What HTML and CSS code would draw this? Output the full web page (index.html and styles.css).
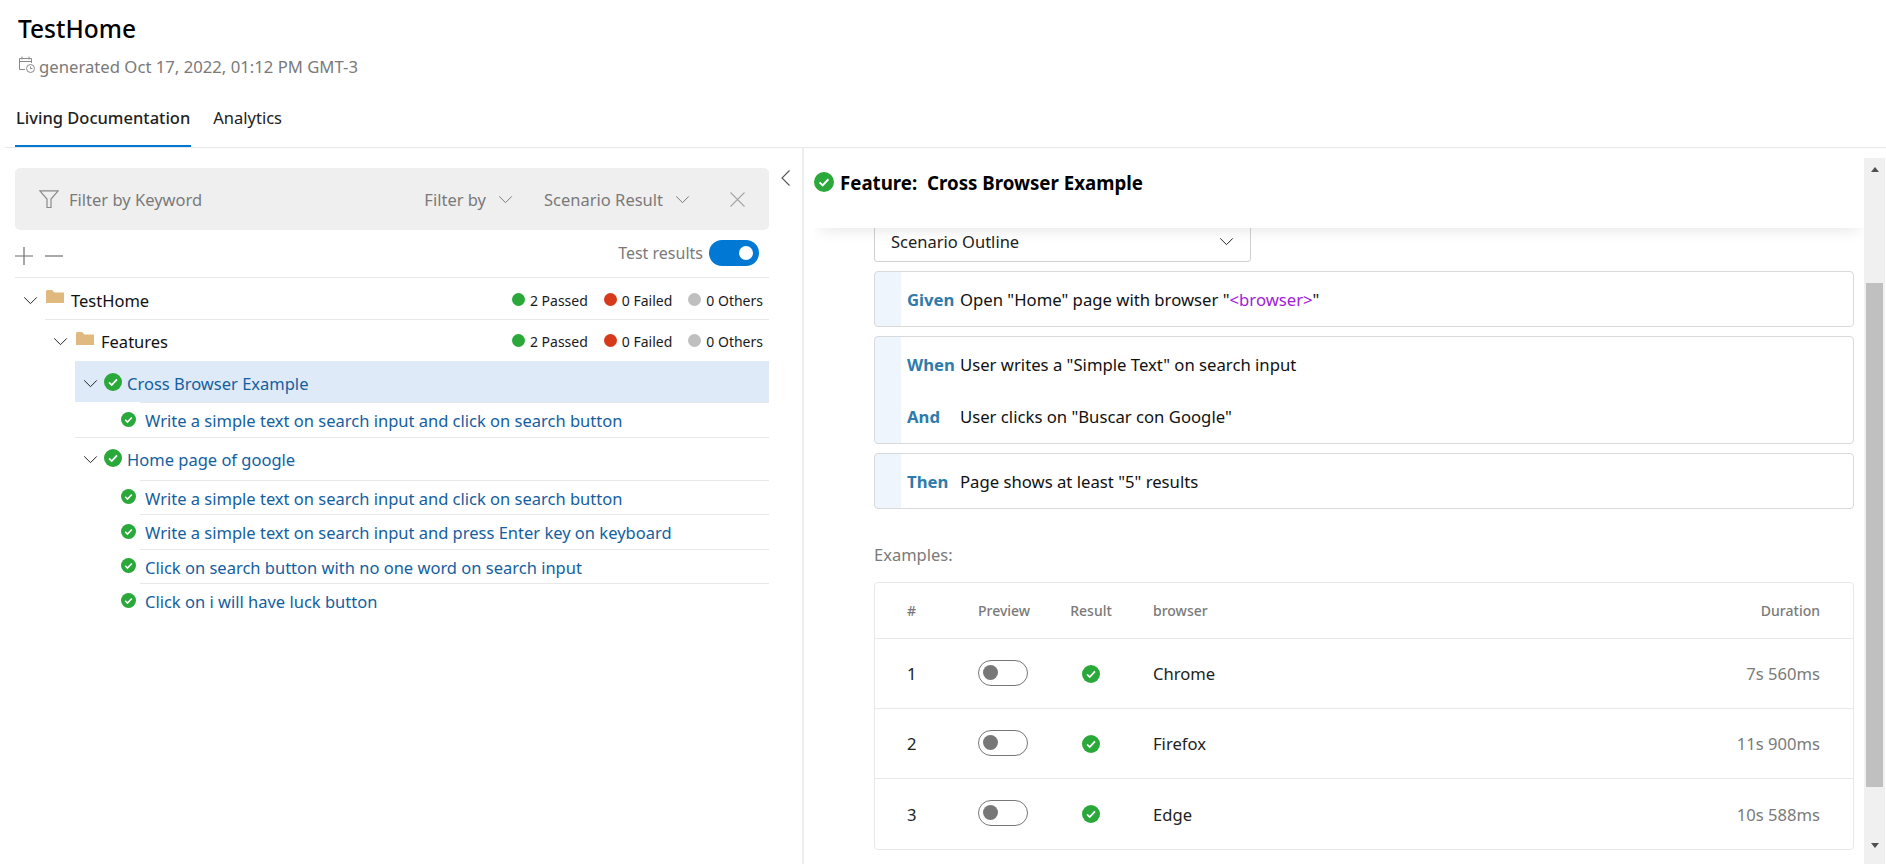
FILE: index.html
```html
<!DOCTYPE html>
<html lang="en">

<head>
    <meta charset="UTF-8">
    <title>TestHome - Living Documentation</title>
    <link rel="stylesheet" href="styles.css">
</head>

<body>
    <svg class="defs" width="0" height="0">
        <symbol id="check" viewBox="0 0 20 20">
            <circle cx="10" cy="10" r="10" fill="#2aa83a" />
            <path d="M5.6 10.4l3 3 5.8-6.2" fill="none" stroke="#fff" stroke-width="2" />
        </symbol>
        <symbol id="chevron" viewBox="0 0 16 10">
            <path d="M1 1.5l7 7 7-7" fill="none" stroke="currentColor" stroke-width="1.1" />
        </symbol>
        <symbol id="folder" viewBox="0 0 18 13">
            <path d="M0 1.5Q0 0 1.5 0H6l2.5 2.5H18V13H0z" fill="#dfb97e" />
        </symbol>
    </svg>

    <header class="page-head">
        <h1 class="title">TestHome</h1>
        <p class="generated">
            <svg class="cal-icon" width="18" height="18" viewBox="0 0 18 18" fill="none" stroke="#8a8a8a">
                <path d="M7 13.5H1.5v-11h12V7M1.5 5.5h12M4 .5v3M11 .5v3" />
                <circle cx="12.5" cy="12.5" r="4" />
                <path d="M12.5 10.5v2h2" />
            </svg>
            generated Oct 17, 2022, 01:12 PM GMT-3
        </p>
        <nav class="tabs">
            <a class="tab active">Living Documentation</a>
            <a class="tab">Analytics</a>
        </nav>
    </header>

    <main class="main">
        <section class="left">
            <div class="filter-bar">
                <svg class="funnel" width="20" height="19" viewBox="0 0 20 19" fill="none" stroke="#8a8a8a" stroke-width="1.2">
                    <path d="M.8.8h18.4L12 9v8.5H8V9z" />
                </svg>
                <span class="filter-keyword">Filter by Keyword</span>
                <span class="filter-drop">Filter by <svg class="chev-grey"><use href="#chevron" /></svg></span>
                <span class="filter-drop wide">Scenario Result <svg class="chev-grey"><use href="#chevron" /></svg></span>
                <svg class="filter-close" width="15" height="15" viewBox="0 0 15 15" stroke="#a6a6a6" stroke-width="1.1">
                    <path d="M.5.5l14 14M14.5.5l-14 14" />
                </svg>
            </div>

            <div class="tree-tools">
                <svg class="tool" width="18" height="18" viewBox="0 0 18 18" stroke="#6f6f6f" stroke-width="1.2">
                    <path d="M0 9h18M9 0v18" />
                </svg>
                <svg class="tool" width="18" height="18" viewBox="0 0 18 18" stroke="#6f6f6f" stroke-width="1.2">
                    <path d="M0 9h18" />
                </svg>
                <span class="tools-label">Test results</span>
                <span class="switch"></span>
            </div>

            <div class="tree">
                <div class="row row-root">
                    <svg class="chev"><use href="#chevron" /></svg>
                    <svg class="folder"><use href="#folder" /></svg>
                    <span class="row-name">TestHome</span>
                    <span class="counts">
                        <span class="count"><i class="dot green"></i>2 Passed</span>
                        <span class="count"><i class="dot red"></i>0 Failed</span>
                        <span class="count"><i class="dot grey"></i>0 Others</span>
                    </span>
                </div>
                <div class="row row-folder">
                    <svg class="chev"><use href="#chevron" /></svg>
                    <svg class="folder"><use href="#folder" /></svg>
                    <span class="row-name">Features</span>
                    <span class="counts">
                        <span class="count"><i class="dot green"></i>2 Passed</span>
                        <span class="count"><i class="dot red"></i>0 Failed</span>
                        <span class="count"><i class="dot grey"></i>0 Others</span>
                    </span>
                </div>
                <div class="row row-feature selected">
                    <svg class="chev"><use href="#chevron" /></svg>
                    <svg class="ok"><use href="#check" /></svg>
                    <a class="row-link">Cross Browser Example</a>
                </div>
                <div class="row row-scenario">
                    <svg class="ok-small"><use href="#check" /></svg>
                    <a class="row-link">Write a simple text on search input and click on search button</a>
                </div>
                <div class="row row-feature second">
                    <svg class="chev"><use href="#chevron" /></svg>
                    <svg class="ok"><use href="#check" /></svg>
                    <a class="row-link">Home page of google</a>
                </div>
                <div class="row row-scenario">
                    <svg class="ok-small"><use href="#check" /></svg>
                    <a class="row-link">Write a simple text on search input and click on search button</a>
                </div>
                <div class="row row-scenario">
                    <svg class="ok-small"><use href="#check" /></svg>
                    <a class="row-link">Write a simple text on search input and press Enter key on keyboard</a>
                </div>
                <div class="row row-scenario">
                    <svg class="ok-small"><use href="#check" /></svg>
                    <a class="row-link">Click on search button with no one word on search input</a>
                </div>
                <div class="row row-scenario">
                    <svg class="ok-small"><use href="#check" /></svg>
                    <a class="row-link">Click on i will have luck button</a>
                </div>
            </div>
        </section>

        <div class="collapse">
            <svg width="9" height="16" viewBox="0 0 9 16" fill="none" stroke="#555" stroke-width="1.1">
                <path d="M8.5.5L1 8l7.5 7.5" />
            </svg>
        </div>

        <section class="detail">
            <div class="detail-body">
                <div class="feature-head">
                    <svg class="ok"><use href="#check" /></svg>
                    <h2 class="feature-title">Feature:&nbsp; Cross Browser Example</h2>
                </div>
                <div class="content">
                    <div class="select">Scenario Outline <svg class="chev"><use href="#chevron" /></svg></div>

                    <div class="step">
                        <div class="step-line"><b class="kw">Given</b><span>Open "Home" page with browser "<span class="param">&lt;browser&gt;</span>"</span></div>
                    </div>
                    <div class="step">
                        <div class="step-line"><b class="kw">When</b><span>User writes a "Simple Text" on search input</span></div>
                        <div class="step-line"><b class="kw">And</b><span>User clicks on "Buscar con Google"</span></div>
                    </div>
                    <div class="step">
                        <div class="step-line"><b class="kw">Then</b><span>Page shows at least "5" results</span></div>
                    </div>

                    <p class="examples-label">Examples:</p>
                    <table class="examples">
                        <thead>
                            <tr>
                                <th class="col-num">#</th>
                                <th class="col-preview">Preview</th>
                                <th class="col-result">Result</th>
                                <th class="col-browser">browser</th>
                                <th class="col-duration">Duration</th>
                            </tr>
                        </thead>
                        <tbody>
                            <tr>
                                <td class="col-num">1</td>
                                <td class="col-preview"><span class="mini-switch"></span></td>
                                <td class="col-result"><svg class="ok-small"><use href="#check" /></svg></td>
                                <td class="col-browser">Chrome</td>
                                <td class="col-duration">7s 560ms</td>
                            </tr>
                            <tr>
                                <td class="col-num">2</td>
                                <td class="col-preview"><span class="mini-switch"></span></td>
                                <td class="col-result"><svg class="ok-small"><use href="#check" /></svg></td>
                                <td class="col-browser">Firefox</td>
                                <td class="col-duration">11s 900ms</td>
                            </tr>
                            <tr>
                                <td class="col-num">3</td>
                                <td class="col-preview"><span class="mini-switch"></span></td>
                                <td class="col-result"><svg class="ok-small"><use href="#check" /></svg></td>
                                <td class="col-browser">Edge</td>
                                <td class="col-duration">10s 588ms</td>
                            </tr>
                        </tbody>
                    </table>
                </div>
            </div>
            <div class="scrollbar">
                <span class="arrow-up"></span>
                <span class="thumb"></span>
                <span class="arrow-down"></span>
            </div>
        </section>
    </main>
</body>

</html>
```

FILE: styles.css
```css
* {
    box-sizing: border-box;
}

html,
body {
    height: 100%;
}

body {
    margin: 0;
    overflow: hidden;
    display: flex;
    flex-direction: column;
    background-color: #fff;
    color: #1a1a1a;
    font-family: "Noto Sans", "Open Sans", Arial, sans-serif;
    font-size: 16.5px;
}

.defs {
    position: absolute;
}

/* header */
.page-head {
    height: 148px;
    flex-shrink: 0;
    padding: 12px 0 0 10px;
    margin-left: 5px;
    border-bottom: 1px solid #e8e8e8;
}

.title {
    margin: 0 0 0 3px;
    height: 34px;
    font-size: 24.5px;
    line-height: 34px;
    font-weight: 500;
    color: #000;
}

.generated {
    margin: 8px 0 0 3px;
    height: 24px;
    display: flex;
    align-items: center;
    gap: 3px;
    font-size: 16.7px;
    color: #7a7a7a;
}

.cal-icon {
    margin-top: -3px;
}

.tabs {
    display: flex;
    gap: 21px;
    margin-top: 24px;
}

.tab {
    height: 45px;
    padding: 0 1px;
    line-height: 32px;
    font-size: 16.5px;
    color: #222;
}

.tab.active {
    font-weight: 500;
    border-bottom: 2px solid #0078d4;
}

.main {
    flex: 1;
    min-height: 0;
    display: flex;
}

/* left side */
.left {
    width: 754px;
    margin-left: 15px;
    padding-top: 20px;
    flex-shrink: 0;
}

.filter-bar {
    height: 62px;
    display: flex;
    align-items: center;
    padding: 1px 24px 0;
    background-color: #efefef;
    border-radius: 5px;
    color: #7a7a7a;
}

.filter-keyword {
    margin-left: 10px;
    flex: 1;
}

.filter-drop {
    display: flex;
    align-items: center;
    gap: 12px;
    margin-right: 31px;
}

.filter-drop.wide {
    margin-right: 40px;
}

.chev-grey {
    width: 15px;
    height: 9px;
    color: #7a7a7a;
}

.tree-tools {
    height: 48px;
    padding: 0 10px 2px 0;
    display: flex;
    align-items: center;
    gap: 12px;
    border-bottom: 1px solid #e8e8e8;
}

.tool {
    margin-top: 6px;
}

.tools-label {
    margin-left: auto;
    margin-right: -6px;
    color: #7a7a7a;
    font-size: 16px;
}

.switch {
    position: relative;
    width: 50px;
    height: 26px;
    border-radius: 13px;
    background-color: #0078d4;
}

.switch::after {
    content: "";
    position: absolute;
    top: 6px;
    right: 6px;
    width: 14px;
    height: 14px;
    border-radius: 50%;
    background-color: #fff;
}

.row {
    display: flex;
    align-items: center;
    padding-top: 2px;
}

.row-root {
    height: 42px;
    padding-left: 8px;
    position: relative;
}

/* line under the root row starts at the folder, not at the edge */
.row-root::after {
    content: "";
    position: absolute;
    left: 30px;
    right: 0;
    bottom: 0;
    height: 1px;
    background-color: #e8e8e8;
}

.row-folder {
    height: 41px;
    padding-left: 38px;
}

.chev {
    width: 15px;
    height: 9px;
    flex-shrink: 0;
    color: #222;
}

.folder {
    width: 18px;
    height: 13px;
    margin: -7px 7px 0 8px;
    flex-shrink: 0;
}

.row-name {
    color: #111;
}

.counts {
    margin-left: auto;
    display: flex;
    gap: 16px;
    padding-right: 6px;
    font-size: 14px;
}

.count {
    display: flex;
    align-items: center;
    gap: 5px;
}

.dot {
    width: 13px;
    height: 13px;
    flex-shrink: 0;
    margin-top: -2px;
    border-radius: 50%;
}

.green {
    background-color: #2aa83a;
}

.red {
    background-color: #d6391c;
}

.grey {
    background-color: #bfbfbf;
}

.row-feature {
    height: 41px;
    margin-left: 60px;
    padding-left: 8px;
}

.row-feature.selected {
    padding-top: 4px;
    background-color: #deeaf7;
}

.row-feature.second {
    height: 43px;
    border-top: 1px solid #e8e8e8;
}

.ok {
    width: 18px;
    height: 18px;
    margin: -3px 5px 0 6px;
    flex-shrink: 0;
}

.ok-small {
    width: 15px;
    height: 15px;
    margin-top: -3px;
    flex-shrink: 0;
}

.row-link {
    color: #14609f;
}

.row-scenario {
    height: 34.5px;
    margin-left: 125px;
    border-top: 1px solid #e8e8e8;
}

.row-scenario .ok-small {
    margin-left: -19px;
    margin-right: 9px;
}

.collapse {
    width: 35px;
    padding: 22px 0 0 12px;
    flex-shrink: 0;
    border-right: 2px solid #eee;
}

.collapse svg {
    display: block;
}

/* right side */
.detail {
    flex: 1;
    min-width: 0;
    display: flex;
    padding: 10px 1px 0 10px;
}

.detail-body {
    flex: 1;
    min-width: 0;
    overflow: hidden;
}

.feature-head {
    position: relative;
    z-index: 1;
    height: 70px;
    padding-bottom: 21px;
    display: flex;
    align-items: center;
    background-color: #fff;
    box-shadow: 0 8px 14px -6px rgba(0, 0, 0, 0.1);
}

.feature-head .ok {
    width: 20px;
    height: 20px;
    margin: -2px 6px 0 0;
}

.feature-title {
    margin: 0;
    font-size: 18.7px;
    font-weight: 700;
    color: #000;
}

.content {
    padding: 0 10px 0 60px;
}

.select {
    width: 377px;
    height: 40px;
    margin-top: -6px;
    padding: 0 16px 2px;
    display: flex;
    align-items: center;
    justify-content: space-between;
    border: 1px solid #d0d0d0;
    border-radius: 3px;
    color: #222;
}

.step {
    margin-top: 9px;
    padding-left: 26px;
    border: 1px solid #d9d9d9;
    border-radius: 4px;
    background: linear-gradient(to right, #eef5fc 26px, #fff 26px);
}

.step-line {
    height: 54px;
    display: flex;
    align-items: center;
    font-size: 16.7px;
    color: #111;
}

.step-line + .step-line {
    margin-top: -2px;
}

.kw {
    width: 53px;
    margin-left: 6px;
    flex-shrink: 0;
    color: #2f7bab;
}

.param {
    color: #a020d8;
}

.examples-label {
    margin: 34px 0 0 0;
    height: 39px;
    color: #7a7a7a;
}

.examples {
    width: 100%;
    border: 1px solid #e8e8e8;
    border-radius: 4px;
    border-spacing: 0;
    table-layout: fixed;
}

.examples th {
    height: 56px;
    font-size: 14px;
    font-weight: 500;
    color: #7a7a7a;
    text-align: left;
    border-bottom: 1px solid #e8e8e8;
}

.examples td {
    height: 70px;
    font-size: 16.6px;
    color: #222;
    border-bottom: 1px solid #e8e8e8;
}

.examples tr:last-child td {
    border-bottom: none;
}

.col-num {
    width: 102px;
    padding-left: 32px;
}

.col-preview {
    width: 82px;
}

.examples .col-result {
    width: 64px;
    text-align: center;
}

.col-browser {
    padding-left: 30px;
}

.examples .col-duration {
    width: 200px;
    padding-right: 33px;
    text-align: right;
    color: #7a7a7a;
}

.col-result .ok-small {
    width: 18px;
    height: 18px;
    display: block;
    margin: 0 auto;
}

.mini-switch {
    display: block;
    position: relative;
    width: 50px;
    height: 26px;
    margin-top: -2px;
    border: 1px solid #777;
    border-radius: 13px;
}

.mini-switch::after {
    content: "";
    position: absolute;
    top: 4px;
    left: 4px;
    width: 15px;
    height: 15px;
    border-radius: 50%;
    background-color: #777;
}

/* the scrollbar is drawn, the panel does not really scroll */
.scrollbar {
    width: 21px;
    flex-shrink: 0;
    display: flex;
    flex-direction: column;
    align-items: center;
    padding: 9px 0 0;
    background-color: #f0f0f0;
}

.arrow-up,
.arrow-down {
    width: 0;
    height: 0;
    border-left: 4.5px solid transparent;
    border-right: 4.5px solid transparent;
}

.arrow-up {
    border-bottom: 5px solid #505050;
}

.arrow-down {
    margin-top: 56px;
    border-top: 5px solid #505050;
}

.thumb {
    width: 17px;
    height: 504px;
    margin-top: 111px;
    background-color: #c0c0c0;
}
```
